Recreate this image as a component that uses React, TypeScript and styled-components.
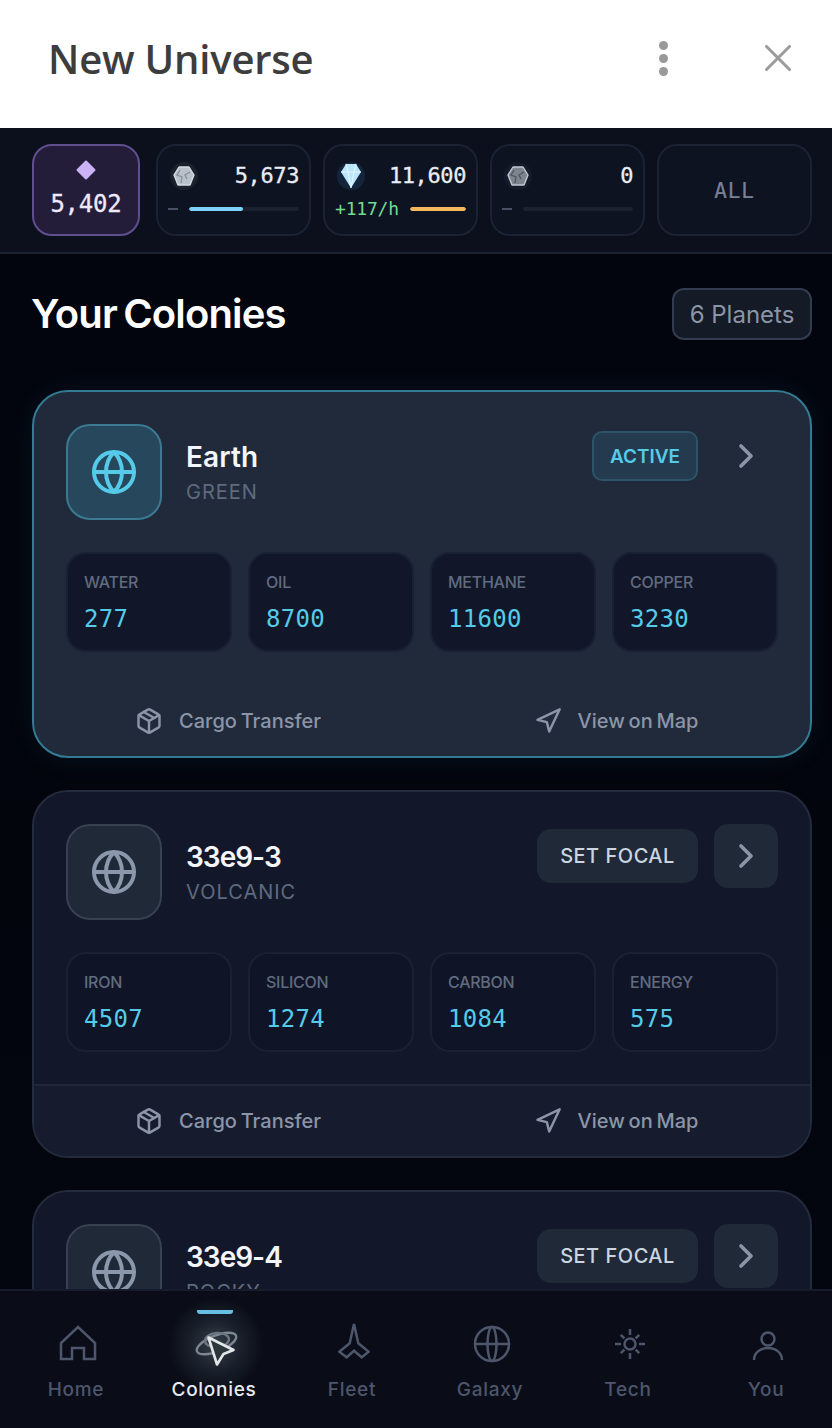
import React from "react";
import styled, { createGlobalStyle } from "styled-components";
import { ChevronRight, Globe, Navigation, Package, X } from "lucide-react";

const GlobalStyle = createGlobalStyle`
  html, body {
    margin: 0;
    padding: 0;
    background: #03050e;
  }
  * {
    box-sizing: border-box;
  }
`;

const sans = `Inter, "Noto Sans", sans-serif`;
const mono = `"DejaVu Sans Mono", "Liberation Mono", monospace`;

const Screen = styled.div`
  width: 832px;
  height: 1428px;
  display: flex;
  flex-direction: column;
  overflow: hidden;
  font-family: ${sans};
`;

const Header = styled.header`
  height: 128px;
  flex: none;
  background: #fff;
  display: flex;
  align-items: center;
  padding: 0 31px 8px 48px;
`;

const HeaderTitle = styled.h1`
  margin: 0 0 2px;
  flex: 1;
  font: 600 40px/1.2 "Open Sans", sans-serif;
  color: #3d3d3d;
  letter-spacing: -0.2px;
`;

const HeaderDots = styled.div`
  width: 9px;
  display: flex;
  flex-direction: column;
  gap: 4px;
  margin: 0 87px 4px 0;
`;

const HeaderDot = styled.span`
  width: 9px;
  height: 9px;
  border-radius: 50%;
  background: #999;
`;

const CloseIcon = styled(X)`
  width: 46px;
  height: 46px;
  color: #9b9b9b;
  margin-bottom: 4px;
`;

const ResourceBar = styled.div`
  flex: none;
  height: 126px;
  padding: 16px 20px 16px 32px;
  display: flex;
  gap: 12px;
  background: #0c101d;
  border-bottom: 2px solid #1b2232;
`;

const FocusChip = styled.div`
  width: 108px;
  height: 92px;
  margin-right: 4px;
  border: 2px solid #5f4f8f;
  border-radius: 20px;
  background: #231d3a;
  display: flex;
  flex-direction: column;
  align-items: center;
  padding-top: 14px;
`;

const FocusValue = styled.div`
  margin-top: 9px;
  font: 400 24px/30px ${mono};
  letter-spacing: -0.2px;
  -webkit-text-stroke: 0.3px #eee9fb;
  color: #eee9fb;
`;

const Chip = styled.div`
  width: 155px;
  height: 92px;
  border: 2px solid #1b2234;
  border-radius: 20px;
  background: #0e1321;
  padding: 15px 10px 0;
  display: flex;
  flex-direction: column;
`;

const ChipTop = styled.div`
  display: flex;
  align-items: center;
  justify-content: space-between;
  height: 30px;
`;

const ChipIcon = styled.div<{ $glow: string }>`
  width: 28px;
  height: 28px;
  margin-left: 2px;
  border-radius: 50%;
  background: ${(p) => p.$glow};
  display: flex;
  align-items: center;
  justify-content: center;
`;

const ChipValue = styled.div`
  font: 400 22px/30px ${mono};
  letter-spacing: -0.4px;
  -webkit-text-stroke: 0.3px #e8edf5;
  color: #e8edf5;
`;

const ChipBottom = styled.div`
  display: flex;
  align-items: center;
  gap: 11px;
  height: 20px;
  margin-top: 8px;
`;

const ChipDash = styled.span`
  width: 10px;
  height: 2px;
  background: #475064;
`;

const ChipRate = styled.span`
  font: 400 18px/20px ${mono};
  letter-spacing: -0.2px;
  color: #6fdc94;
  white-space: nowrap;
`;

const BarTrack = styled.div`
  flex: 1;
  height: 4px;
  border-radius: 2px;
  background: #1c2130;
  overflow: hidden;
`;

const BarFill = styled.div<{ $color: string }>`
  height: 100%;
  background: ${(p) => p.$color};
  border-radius: 2px;
`;

const AllChip = styled(Chip)`
  padding: 2px 0 0;
  align-items: center;
  justify-content: center;
  font: 400 21px/1 ${mono};
  letter-spacing: 0.8px;
  -webkit-text-stroke: 0.2px #7a8197;
  color: #7a8197;
`;

const Main = styled.main`
  flex: 1;
  min-height: 0;
  overflow: hidden;
  padding: 34px 20px 0 32px;
  background: linear-gradient(180deg, #03050e 0%, #03050d 60%, #04060f 100%);
`;

const TitleRow = styled.div`
  display: flex;
  align-items: center;
  justify-content: space-between;
  height: 52px;
  margin-bottom: 50px;
`;

const PageTitle = styled.h2`
  margin: 0 0 0 -1px;
  font: 600 40px/1.2 ${sans};
  letter-spacing: -0.85px;
  word-spacing: -3px;
  color: #fff;
`;

const CountBadge = styled.div`
  height: 52px;
  width: 140px;
  border: 2px solid #333c4e;
  border-radius: 12px;
  background: #141a26;
  padding-top: 1px;
  display: flex;
  align-items: center;
  justify-content: center;
  font: 400 24px/1 ${sans};
  color: #8b95a7;
`;

const CardList = styled.div`
  display: flex;
  flex-direction: column;
  gap: 32px;
`;

const Card = styled.section<{ $active?: boolean }>`
  flex: none;
  height: 368px;
  border: 2px solid ${(p) => (p.$active ? "#337b92" : "#232c3e")};
  border-radius: 36px;
  background: ${(p) => (p.$active ? "#202a3a" : "#121829")};
  box-shadow: ${(p) => (p.$active ? "0 0 28px rgba(56, 189, 248, 0.08)" : "none")};
  overflow: hidden;
  display: flex;
  flex-direction: column;
`;

const CardBody = styled.div`
  padding: 32px;
  height: 292px;
`;

const CardTop = styled.div`
  display: flex;
  height: 96px;
  margin-bottom: 32px;
`;

const PlanetBox = styled.div<{ $active?: boolean }>`
  width: 96px;
  height: 96px;
  flex: none;
  border: 2px solid ${(p) => (p.$active ? "#3b7a92" : "#374151")};
  border-radius: 24px;
  background: ${(p) => (p.$active ? "#26475c" : "#1f2937")};
  color: ${(p) => (p.$active ? "#56cbe9" : "#8b97aa")};
  display: flex;
  align-items: center;
  justify-content: center;
`;

const PlanetText = styled.div`
  flex: 1;
  margin-left: 24px;
  display: flex;
  flex-direction: column;
  justify-content: center;
`;

const PlanetName = styled.div<{ $active?: boolean }>`
  font: 600 28px/36px ${sans};
  color: #f3f6fb;
  letter-spacing: ${(p) => (p.$active ? "0.1px" : "-1px")};
`;

const PlanetType = styled.div`
  margin-top: 4px;
  font: 400 20px/26px ${sans};
  letter-spacing: 1px;
  color: #5f6a7e;
`;

const CardActions = styled.div`
  display: flex;
  align-items: center;
  gap: 16px;
  height: 64px;
`;

const ActiveTag = styled.div`
  width: 106px;
  height: 50px;
  border: 2px solid #2b5468;
  border-radius: 10px;
  background: #243a4e;
  display: flex;
  align-items: center;
  justify-content: center;
  font: 600 19px/1 ${sans};
  color: #56cbe9;
`;

const FocalButton = styled.button`
  width: 161px;
  height: 54px;
  border: 0;
  border-radius: 14px;
  background: #1f2937;
  font: 500 20px/1 ${sans};
  letter-spacing: 0.5px;
  color: #cbd5e1;
`;

const ChevronButton = styled.div<{ $plain?: boolean }>`
  width: 64px;
  height: 64px;
  border-radius: 14px;
  background: ${(p) => (p.$plain ? "transparent" : "#1f2937")};
  color: #8b95a7;
  display: flex;
  align-items: center;
  justify-content: center;
`;

const StatGrid = styled.div`
  display: grid;
  grid-template-columns: repeat(4, 1fr);
  gap: 16px;
`;

const Stat = styled.div<{ $active?: boolean }>`
  height: 100px;
  border: 2px solid ${(p) => (p.$active ? "#182033" : "#192133")};
  border-radius: 20px;
  background: ${(p) => (p.$active ? "#111728" : "#0f1526")};
  padding: 18px 16px 0;
`;

const StatLabel = styled.div`
  font: 500 16px/20px ${sans};
  letter-spacing: -0.25px;
  color: #616b80;
`;

const StatValue = styled.div`
  margin-top: 11px;
  font: 400 24px/32px ${mono};
  letter-spacing: 0.3px;
  color: #56cbe9;
`;

const CardFooter = styled.div<{ $active?: boolean }>`
  flex: 1;
  display: grid;
  grid-template-columns: 1fr 1fr;
  border-top: 2px solid ${(p) => (p.$active ? "transparent" : "#1f2739")};
  background: ${(p) => (p.$active ? "transparent" : "#161c2e")};
`;

const FooterAction = styled.div`
  display: flex;
  align-items: center;
  justify-content: center;
  gap: 16px;
  font: 500 20px/1 ${sans};
  word-spacing: -1.5px;
  color: #8b95a7;
`;

const BottomNav = styled.nav`
  flex: none;
  height: 139px;
  display: grid;
  grid-template-columns: repeat(6, 138px);
  padding: 0 8px;
  background: #0a0d18;
  border-top: 2px solid #161c2b;
  position: relative;
  z-index: 1;
`;

const NavItem = styled.div<{ $active?: boolean }>`
  position: relative;
  display: flex;
  flex-direction: column;
  align-items: center;
  padding-top: 31px;
  font: 500 19px/24px ${sans};
  letter-spacing: 0.7px;
  color: ${(p) => (p.$active ? "#e6eaf2" : "#4d566b")};
`;

const NavIconSlot = styled.div`
  position: relative;
  width: 48px;
  height: 44px;
  margin: 0 0 12px 2px;
  display: flex;
  align-items: center;
  justify-content: center;
`;

const NavLabel = styled.span`
  position: relative;
  margin-left: -2px;
`;

const NavGlow = styled.div`
  position: absolute;
  left: 15px;
  top: 0;
  width: 110px;
  height: 108px;
  background: radial-gradient(circle closest-side at 50% 50%, rgba(150, 175, 180, 0.3) 0%, rgba(110, 140, 150, 0.14) 50%, rgba(60, 90, 110, 0) 88%);
`;

const NavIndicator = styled.div`
  position: absolute;
  top: 19px;
  left: 51px;
  width: 36px;
  height: 4px;
  border-radius: 0 0 3px 3px;
  background: #67bfe3;
`;

function RockIcon({ dim }: { dim?: boolean }) {
  return (
    <svg width="22" height="22" viewBox="0 0 22 22">
      <path
        d="M6 2 L16 2 L21 10 L17 20 L5 20 L1 10 Z"
        fill={dim ? "#7e848e" : "#b8c1ca"}
        stroke={dim ? "#c3c8d0" : "#d4dae1"}
        strokeWidth="1.4"
        strokeLinejoin="round"
      />
      <path
        d="M7 5 L4 10 L9 12 L8 18 M17 7 L12 10 L14 14"
        fill="none"
        stroke={dim ? "#50555f" : "#858d98"}
        strokeWidth="1.3"
      />
    </svg>
  );
}

function CrystalIcon() {
  return (
    <svg width="22" height="26" viewBox="0 0 22 26">
      <path d="M6 1 H16 L21 9 L11 25 L1 9 Z" fill="#b9e6fd" />
      <path d="M1 9 H21 M6 1 L8 9 L11 25 L14 9 L16 1" fill="none" stroke="#e6f6ff" strokeWidth="1.1" />
    </svg>
  );
}

function DiamondIcon() {
  return (
    <svg width="20" height="20" viewBox="0 0 20 20">
      <rect x="3" y="3" width="14" height="14" rx="1" transform="rotate(45 10 10)" fill="#cbb2f7" />
    </svg>
  );
}

const navStroke = { fill: "none", stroke: "currentColor", strokeWidth: 2.5 };

function HomeIcon() {
  return (
    <svg width="40" height="40" viewBox="0 0 40 40" {...navStroke}>
      <path d="M3 35 V19 L20 3 L37 19 V35 H26 V24 H14 V35 Z" />
    </svg>
  );
}

function ColoniesIcon() {
  return (
    <svg width="48" height="44" viewBox="0 0 48 44" fill="none">
      <ellipse cx="24.5" cy="21.5" rx="21" ry="8" transform="rotate(-22 24.5 21.5)" stroke="#7d8794" strokeWidth="2.4" />
      <ellipse cx="25" cy="18" rx="12" ry="7" transform="rotate(-5 25 18)" stroke="#6b7582" strokeWidth="2.4" />
      <path
        d="M16.5 15.5 L41.5 28 L31.5 32 L25 42.5 Z"
        fill="#2b363c"
        stroke="#e3e6e8"
        strokeWidth="2.6"
        strokeLinejoin="round"
      />
    </svg>
  );
}

function FleetIcon() {
  return (
    <svg width="32" height="44" viewBox="0 0 32 44" fill="none" stroke="currentColor" strokeWidth="2.5">
      <path d="M16 2 L20.3 21.3 L30.7 29.7 L23.7 35.3 L16 28.7 L8.7 35.3 L1.3 29.7 L11.7 21.3 Z" />
    </svg>
  );
}

function GalaxyIcon() {
  return (
    <svg width="38" height="38" viewBox="0 0 38 38" {...navStroke}>
      <circle cx="19" cy="19" r="17" />
      <ellipse cx="19" cy="19" rx="4.5" ry="17" />
      <path d="M2 19 H36" />
    </svg>
  );
}

function TechIcon() {
  const rays = [0, 45, 90, 135, 180, 225, 270, 315];
  return (
    <svg width="32" height="32" viewBox="0 0 32 32" {...navStroke}>
      <circle cx="16" cy="16" r="5.5" />
      {rays.map((r) => (
        <path key={r} d={r % 90 === 0 ? "M16 1 V7" : "M16 3 V8"} transform={`rotate(${r} 16 16)`} />
      ))}
    </svg>
  );
}

function YouIcon() {
  return (
    <svg width="32" height="36" viewBox="0 0 32 36" {...navStroke}>
      <circle cx="16" cy="13" r="6.5" />
      <path d="M2 34 C2 27 8 22 16 22 C24 22 30 27 30 34" />
    </svg>
  );
}

const colonies = [
  {
    name: "Earth",
    type: "GREEN",
    active: true,
    stats: [
      ["WATER", "277"],
      ["OIL", "8700"],
      ["METHANE", "11600"],
      ["COPPER", "3230"],
    ],
  },
  {
    name: "33e9-3",
    type: "VOLCANIC",
    stats: [
      ["IRON", "4507"],
      ["SILICON", "1274"],
      ["CARBON", "1084"],
      ["ENERGY", "575"],
    ],
  },
  // below the fold, only the top of this one shows
  { name: "33e9-4", type: "ROCKY", stats: [] },
];

const navItems = [
  { label: "Home", icon: <HomeIcon /> },
  { label: "Colonies", icon: <ColoniesIcon />, active: true },
  { label: "Fleet", icon: <FleetIcon /> },
  { label: "Galaxy", icon: <GalaxyIcon /> },
  { label: "Tech", icon: <TechIcon /> },
  { label: "You", icon: <YouIcon /> },
];

export default function App() {
  return (
    <Screen>
      <GlobalStyle />
      <Header>
        <HeaderTitle>New Universe</HeaderTitle>
        <HeaderDots>
          <HeaderDot />
          <HeaderDot />
          <HeaderDot />
        </HeaderDots>
        <CloseIcon strokeWidth={1.6} />
      </Header>

      <ResourceBar>
        <FocusChip>
          <DiamondIcon />
          <FocusValue>5,402</FocusValue>
        </FocusChip>
        <Chip>
          <ChipTop>
            <ChipIcon $glow="#1a212c">
              <RockIcon />
            </ChipIcon>
            <ChipValue>5,673</ChipValue>
          </ChipTop>
          <ChipBottom>
            <ChipDash />
            <BarTrack>
              <BarFill $color="#7dd3fc" style={{ width: "49%" }} />
            </BarTrack>
          </ChipBottom>
        </Chip>
        <Chip>
          <ChipTop>
            <ChipIcon $glow="#14243a">
              <CrystalIcon />
            </ChipIcon>
            <ChipValue>11,600</ChipValue>
          </ChipTop>
          <ChipBottom>
            <ChipRate>+117/h</ChipRate>
            <BarTrack>
              <BarFill $color="#f4b95c" style={{ width: "100%" }} />
            </BarTrack>
          </ChipBottom>
        </Chip>
        <Chip>
          <ChipTop>
            <ChipIcon $glow="#151b2a">
              <RockIcon dim />
            </ChipIcon>
            <ChipValue>0</ChipValue>
          </ChipTop>
          <ChipBottom>
            <ChipDash />
            <BarTrack />
          </ChipBottom>
        </Chip>
        <AllChip>ALL</AllChip>
      </ResourceBar>

      <Main>
        <TitleRow>
          <PageTitle>Your Colonies</PageTitle>
          <CountBadge>6 Planets</CountBadge>
        </TitleRow>
        <CardList>
          {colonies.map((c) => (
            <Card key={c.name} $active={c.active}>
              <CardBody>
                <CardTop>
                  <PlanetBox $active={c.active}>
                    <Globe size={48} strokeWidth={2} />
                  </PlanetBox>
                  <PlanetText>
                    <PlanetName $active={c.active}>{c.name}</PlanetName>
                    <PlanetType>{c.type}</PlanetType>
                  </PlanetText>
                  <CardActions>
                    {c.active ? <ActiveTag>ACTIVE</ActiveTag> : <FocalButton>SET FOCAL</FocalButton>}
                    <ChevronButton $plain={c.active}>
                      <ChevronRight size={40} strokeWidth={2.2} />
                    </ChevronButton>
                  </CardActions>
                </CardTop>
                <StatGrid>
                  {c.stats.map(([label, value]) => (
                    <Stat key={label} $active={c.active}>
                      <StatLabel>{label}</StatLabel>
                      <StatValue>{value}</StatValue>
                    </Stat>
                  ))}
                </StatGrid>
              </CardBody>
              {c.stats.length > 0 && (
                <CardFooter $active={c.active}>
                  <FooterAction>
                    <Package size={28} strokeWidth={2.1} />
                    Cargo Transfer
                  </FooterAction>
                  <FooterAction>
                    <Navigation size={28} strokeWidth={2.1} />
                    View on Map
                  </FooterAction>
                </CardFooter>
              )}
            </Card>
          ))}
        </CardList>
      </Main>

      <BottomNav>
        {navItems.map((item) => (
          <NavItem key={item.label} $active={item.active}>
            {item.active && <NavGlow />}
            {item.active && <NavIndicator />}
            <NavIconSlot>{item.icon}</NavIconSlot>
            <NavLabel>{item.label}</NavLabel>
          </NavItem>
        ))}
      </BottomNav>
    </Screen>
  );
}
